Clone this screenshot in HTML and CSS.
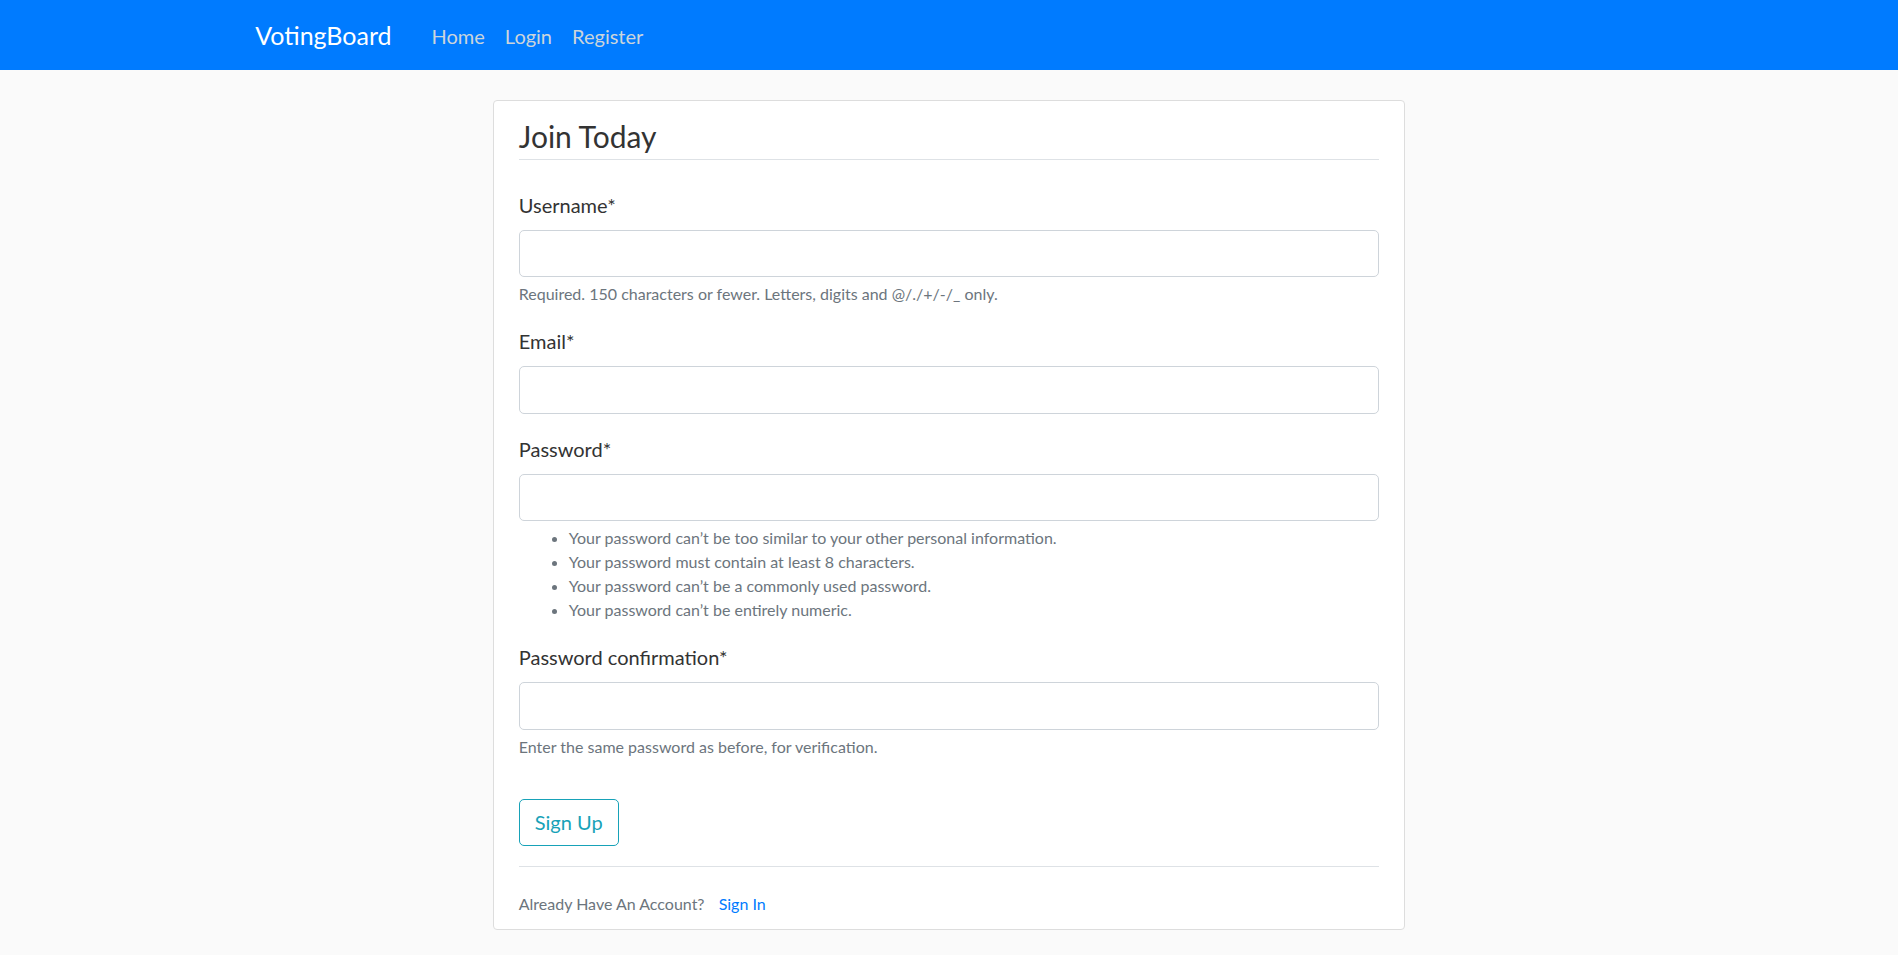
FILE: index.html
```html
<!DOCTYPE html>
<html lang="en">
<head>
<meta charset="utf-8">
<title>VotingBoard - Register</title>
<link rel="stylesheet" href="styles.css">
</head>
<body>
<header class="site-header">
  <nav class="navbar">
    <div class="container nav-inner">
      <a class="navbar-brand" href="#">VotingBoard</a>
      <div class="navbar-nav">
        <a class="nav-link" href="#">Home</a>
        <a class="nav-link" href="#">Login</a>
        <a class="nav-link" href="#">Register</a>
      </div>
    </div>
  </nav>
</header>
<main class="container main">
  <div class="col">
    <div class="content-section">
      <form>
        <fieldset class="form-group">
          <legend class="legend">Join Today</legend>
          <div class="field">
            <label class="label">Username<span>*</span></label>
            <input class="input" type="text">
            <small class="help">Required. 150 characters or fewer. Letters, digits and @/./+/-/_ only.</small>
          </div>
          <div class="field">
            <label class="label">Email<span>*</span></label>
            <input class="input" type="email">
          </div>
          <div class="field">
            <label class="label">Password<span>*</span></label>
            <input class="input" type="password">
            <small class="help">
              <ul class="help-list">
                <li>Your password can’t be too similar to your other personal information.</li>
                <li>Your password must contain at least 8 characters.</li>
                <li>Your password can’t be a commonly used password.</li>
                <li>Your password can’t be entirely numeric.</li>
              </ul>
            </small>
          </div>
          <div class="field">
            <label class="label">Password confirmation<span>*</span></label>
            <input class="input" type="password">
            <small class="help">Enter the same password as before, for verification.</small>
          </div>
        </fieldset>
        <div class="field">
          <button class="btn-outline-info" type="button">Sign Up</button>
        </div>
      </form>
      <div class="footer-line">
        <small class="muted">Already Have An Account? <a class="signin" href="#">Sign In</a></small>
      </div>
    </div>
  </div>
</main>
</body>
</html>
```
FILE: styles.css
```css
* { box-sizing: border-box; }
html, body { margin: 0; padding: 0; }
body {
  background: #fafafa;
  color: #333333;
  font-family: Lato, "Open Sans", "Liberation Sans", sans-serif;
  font-size: 20px;
  line-height: 1.5;
}
a { text-decoration: none; }
.container {
  width: 1425px;
  margin: 0 auto;
  padding: 0 18.75px;
}
.navbar {
  background: #007bff;
  height: 70px;
}
.nav-inner {
  display: flex;
  align-items: center;
  height: 70px;
  padding-top: 2px;
}
.navbar-brand {
  color: #ffffff;
  font-size: 25px;
  line-height: 37.5px;
  margin-right: 30px;
}
.navbar-nav { display: flex; }
.nav-link {
  color: #cbd5db;
  padding: 10px 10px;
  font-size: 20px;
}
.main { padding-top: 30px; }
.col {
  width: 950px;
  margin-left: 218.75px;
  padding: 0 18.75px;
}
.content-section {
  background: #ffffff;
  border: 1px solid #dddddd;
  border-radius: 4px;
  padding: 12.5px 25px;
  margin-bottom: 25px;
}
.form-group {
  border: 0;
  padding: 0;
  margin: 0 0 20px 0;
  min-width: 0;
}
.legend {
  display: block;
  width: 100%;
  padding: 0;
  font-size: 30px;
  line-height: 1.5;
  border-bottom: 1px solid #dee2e6;
  margin-bottom: 30px;
  color: #333333;
}
.field { margin-bottom: 20px; }
.label {
  display: block;
  margin-bottom: 10px;
}
.input {
  display: block;
  width: 100%;
  height: 47.5px;
  padding: 7.5px 15px;
  font-size: 20px;
  font-family: inherit;
  border: 1px solid #ced4da;
  border-radius: 5px;
  background: #ffffff;
  color: #495057;
}
.help {
  display: block;
  margin-top: 5px;
  font-size: 16px;
  line-height: 24px;
  color: #6c757d;
}
.help-list {
  margin: 0;
  padding-left: 50px;
}
.btn-outline-info {
  display: inline-block;
  font-family: inherit;
  font-size: 20px;
  line-height: 30px;
  padding: 7.5px 15px;
  color: #17a2b8;
  background: transparent;
  border: 1px solid #17a2b8;
  border-radius: 5px;
}
.footer-line {
  border-top: 1px solid #dee2e6;
  padding-top: 20px;
}
.muted {
  font-size: 16px;
  color: #6c757d;
}
.signin {
  color: #007bff;
  margin-left: 10px;
}
```
